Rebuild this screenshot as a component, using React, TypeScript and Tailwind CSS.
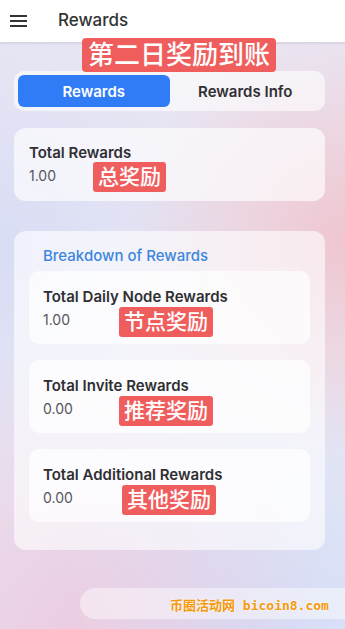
import React from "react";

type ItemProps = {
  title: string;
  value: string;
};

const Tag = ({ text, className }: { text: string; className: string }) => (
  <span
    className={`absolute rounded-[3px] bg-[#f05d5d] px-[5px] text-[21px] leading-[30px] font-medium text-white ${className}`}
  >
    {text}
  </span>
);

const Item = ({ title, value }: ItemProps) => (
  <>
    <div className="text-[15px] leading-[20px] font-semibold text-[#2f2f33]">{title}</div>
    <div className="mt-[3px] text-[14px] leading-[20px] text-[#55565c]">{value}</div>
  </>
);

export default function App() {
  return (
    <div
      className="relative h-[629px] w-full overflow-hidden bg-[#e9e7f3] bg-[radial-gradient(circle_at_100%_38%,rgba(240,190,200,0.8)_0,rgba(240,190,200,0)_42%),radial-gradient(circle_at_20%_100%,rgba(240,200,220,0.8)_0,rgba(240,200,220,0)_40%),radial-gradient(circle_at_70%_105%,rgba(205,220,250,0.9)_0,rgba(205,220,250,0)_45%),radial-gradient(circle_at_0%_40%,rgba(215,220,245,0.9)_0,rgba(215,220,245,0)_50%)]"
      style={{ fontFamily: "Inter, 'Noto Sans CJK SC', sans-serif" }}
    >
      {/* header */}
      <header className="relative z-10 flex h-[42px] items-center bg-white shadow-[0_1px_3px_rgba(0,0,0,0.12)]">
        <div className="ml-[10px] flex w-[17px] flex-col gap-[3px]">
          <span className="h-[2px] w-full bg-[#333]" />
          <span className="h-[2px] w-full bg-[#333]" />
          <span className="h-[2px] w-full bg-[#333]" />
        </div>
        <h1 className="ml-[31px] text-[17px] font-medium text-[#333]">Rewards</h1>
      </header>

      <span className="absolute top-[38px] left-[82px] z-20 rounded-[4px] bg-[#f05d5d] px-[6px] text-[26px] leading-[34px] font-medium text-white">
        第二日奖励到账
      </span>

      <main className="pr-[20px] pl-[14px]">
        {/* tabs */}
        <div className="mt-[29px] flex h-[40px] rounded-[10px] bg-white/60 p-[4px]">
          <button className="flex-1 rounded-[6px] bg-[#2f7cf6] pt-[2px] text-[15px] font-semibold text-white">
            Rewards
          </button>
          <button className="flex-1 pt-[2px] text-[15px] font-semibold text-[#2f2f33]">Rewards Info</button>
        </div>

        {/* total */}
        <section className="relative mt-[17px] h-[73px] rounded-[12px] bg-white/65 px-[15px] pt-[15px]">
          <Item title="Total Rewards" value="1.00" />
          <Tag text="总奖励" className="top-[34px] left-[79px]" />
        </section>

        {/* breakdown */}
        <section className="mt-[30px] rounded-[12px] bg-white/60 px-[15px] pt-[15px] pb-[28px]">
          <h2 className="pl-[14px] text-[15px] leading-[20px] font-medium text-[#3d86dd]">
            Breakdown of Rewards
          </h2>
          <div className="mt-[5px] flex flex-col gap-[16px]">
            <div className="relative h-[73px] rounded-[10px] bg-white/70 px-[14px] pt-[16px]">
              <Item title="Total Daily Node Rewards" value="1.00" />
              <Tag text="节点奖励" className="top-[36px] left-[90px]" />
            </div>
            <div className="relative h-[73px] rounded-[10px] bg-white/70 px-[14px] pt-[16px]">
              <Item title="Total Invite Rewards" value="0.00" />
              <Tag text="推荐奖励" className="top-[36px] left-[90px]" />
            </div>
            <div className="relative h-[73px] rounded-[10px] bg-white/70 px-[14px] pt-[16px]">
              <Item title="Total Additional Rewards" value="0.00" />
              <Tag text="其他奖励" className="top-[36px] left-[93px]" />
            </div>
          </div>
        </section>
      </main>

      {/* bottom pill + watermark */}
      <div className="absolute top-[588px] left-[80px] h-[31px] w-[300px] rounded-full bg-white/45" />
      <span
        className="absolute top-[596px] left-[170px] text-[13px] leading-[20px] font-bold whitespace-nowrap text-[#f59a0a] [text-shadow:0_0_2px_#fff]"
        style={{ fontFamily: "'DejaVu Sans Mono', 'Noto Sans CJK SC', monospace" }}
      >
        币圈活动网 bicoin8.com
      </span>
    </div>
  );
}
